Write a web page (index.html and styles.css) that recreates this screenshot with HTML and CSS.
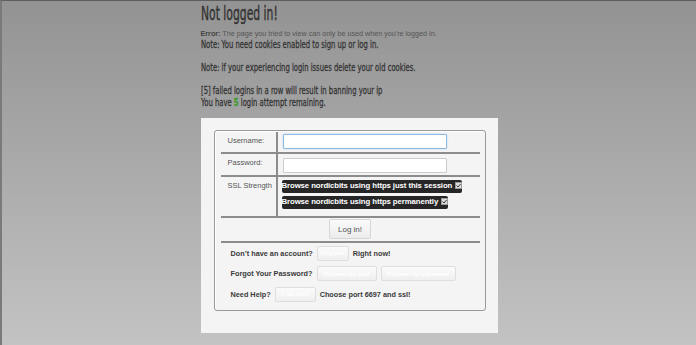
FILE: index.html
```html
<!DOCTYPE html>
<html lang="en">
<head>
	<meta charset="UTF-8">
	<title>Not logged in</title>
	<link rel="stylesheet" href="styles.css">
</head>
<body>
	<div class="page">
		<h1>Not logged in!</h1>
		<p class="error"><b>Error:</b> The page you tried to view can only be used when you're logged in.</p>
		<p class="note">Note: You need cookies enabled to sign up or log in.</p>
		<p class="note gap">Note: if your experiencing login issues delete your old cookies.</p>
		<p class="note gap">[5] failed logins in a row will result in banning your ip<br>You have <b class="green">5</b> login attempt remaining.</p>

		<div class="panel">
			<div class="box">
				<table class="login">
					<tr class="row-user">
						<td class="label">Username:</td>
						<td class="field"><input type="text" class="text focus" name="user"></td>
					</tr>
					<tr class="row-pass">
						<td class="label">Password:</td>
						<td class="field"><input type="password" class="text" name="pass"></td>
					</tr>
					<tr class="row-ssl">
						<td class="label">SSL Strength</td>
						<td class="field">
							<span class="ssl">Browse nordicbits using https just this session <i class="check"><svg width="7" height="7" viewBox="0 0 7 7"><rect x="0.5" y="0.5" width="6" height="6" fill="#ddd" stroke="#999"/><path d="M1.5 3.5l1.5 1.5 2.5-3" fill="none" stroke="#333" stroke-width="1"/></svg></i></span>
							<span class="ssl">Browse nordicbits using https permanently <i class="check"><svg width="7" height="7" viewBox="0 0 7 7"><rect x="0.5" y="0.5" width="6" height="6" fill="#ddd" stroke="#999"/><path d="M1.5 3.5l1.5 1.5 2.5-3" fill="none" stroke="#333" stroke-width="1"/></svg></i></span>
						</td>
					</tr>
					<tr class="row-btn">
						<td colspan="2"><button class="btn">Log in!</button></td>
					</tr>
					<tr class="row-more">
						<td colspan="2">
							<div class="line">Don’t have an account? <button class="ghost w-reg">Register</button> Right now!</div>
							<div class="line">Forgot Your Password? <button class="ghost w-mail">Recover by mail</button> <button class="ghost w-user">Recover by username</button></div>
							<div class="line">Need Help? <button class="ghost w-chat">Chat here</button> Choose port 6697 and ssl!</div>
						</td>
					</tr>
				</table>
			</div>
		</div>
	</div>
</body>
</html>
```

FILE: styles.css
```css
*{
	margin: 0;
	padding: 0;
	box-sizing: border-box;
}

html,body{
	height: 100%;
}

body{
	background: linear-gradient(#939393, #c3c3c3);
	border-top: 1px solid #5e5e5e;
	border-left: 2px solid #7a7a7a;
	font-family: "Liberation Sans", Arial, sans-serif;
	color: #333;
}

.page{
	width: 297px;
	margin: 0 auto;
}

/* no condensed face installed: squeeze DejaVu to the narrow heading look */
h1,
.note{
	font-family: "DejaVu Sans", sans-serif;
	transform-origin: left center;
	white-space: nowrap;
	-webkit-text-stroke: 0.3px #333;
}

h1{
	font-weight: normal;
	font-size: 20px;
	color: #333;
	line-height: 24px;
	transform: scaleX(0.54);
	-webkit-text-stroke: 0.5px #333;
}

.error{
	margin-top: 4px;
	font-size: 7.2px;
	color: #555;
	line-height: 10px;
}

.error b{
	color: #444;
}

.note{
	font-size: 11px;
	line-height: 12px;
	color: #333;
	transform: scaleX(0.62);
}

.gap{
	margin-top: 11px;
}

.green{
	color: #3c9a2c;
	-webkit-text-stroke: 0.3px #3c9a2c;
}

.panel{
	margin-top: 9px;
	background: #f4f4f4;
	height: 215px;
	padding: 12px 12px 0 13px;
}

.box{
	border: 1px solid #999;
	border-radius: 3px;
	box-shadow: 1px 1px 0 #fff inset;
	padding: 1px 5px 5px 6px;
	height: 181px;
}

.login{
	width: 100%;
	border-collapse: collapse;
	font-size: 7.5px;
	color: #555;
}

.login td{
	border: 2px solid #8c8c8c;
	vertical-align: top;
}

.login tr:first-child td{
	border-top: 0;
}

.login .label{
	width: 56px;
	padding: 4px 0 0 7px;
	border-left: 0;
}

.login .field{
	border-right: 0;
	padding: 2px 0 0 5px;
}

.text{
	display: block;
	width: 164px;
	height: 15px;
	border: 1px solid #ccc;
	background: #fff;
	border-radius: 1px;
	font-size: 8px;
}

.focus{
	border-color: #8fb8e0;
	box-shadow: 0 0 2px #b7d3ef;
}

.row-user td{
	height: 21px;
}

.row-pass td{
	height: 23px;
}

.row-pass .field{
	padding-top: 4px;
}

.row-ssl td{
	height: 41px;
}

.row-ssl .field{
	padding: 3px 0 0 4px;
}

.ssl{
	display: table;
	background: #262626;
	color: #fff;
	font-weight: bold;
	font-size: 7.8px;
	line-height: 12px;
	height: 12px;
	padding: 0 3px;
	border-radius: 2px;
	margin-bottom: 3px;
	letter-spacing: -0.1px;
}

.check{
	display: inline-block;
	vertical-align: -1px;
	margin-left: 1px;
}

.row-btn td{
	height: 25px;
	border-left: 0;
	border-right: 0;
	text-align: center;
	padding-top: 1px;
}

.btn{
	width: 42px;
	height: 20px;
	border: 1px solid #d6d6d6;
	border-radius: 2px;
	background: linear-gradient(#fafafa, #ececec);
	font-family: "Liberation Sans", Arial, sans-serif;
	font-size: 8px;
	color: #555;
}

.row-more td{
	height: 62px;
	border-left: 0;
	border-right: 0;
	border-bottom: 0;
	padding: 0 0 0 10px;
	font-weight: bold;
	color: #3a3a3a;
	font-size: 7.3px;
}

.line{
	height: 20.5px;
	display: flex;
	align-items: center;
	gap: 4px;
}

.ghost{
	height: 15px;
	border: 1px solid #dedede;
	border-radius: 2px;
	background: linear-gradient(#fbfbfb, #efefef);
	color: #fff;
	font-family: "Liberation Sans", Arial, sans-serif;
	font-size: 6px;
	font-weight: bold;
}

.w-reg{
	width: 32px;
}

.w-mail{
	width: 60px;
}

.w-user{
	width: 75px;
}

.w-chat{
	width: 41px;
}
```
